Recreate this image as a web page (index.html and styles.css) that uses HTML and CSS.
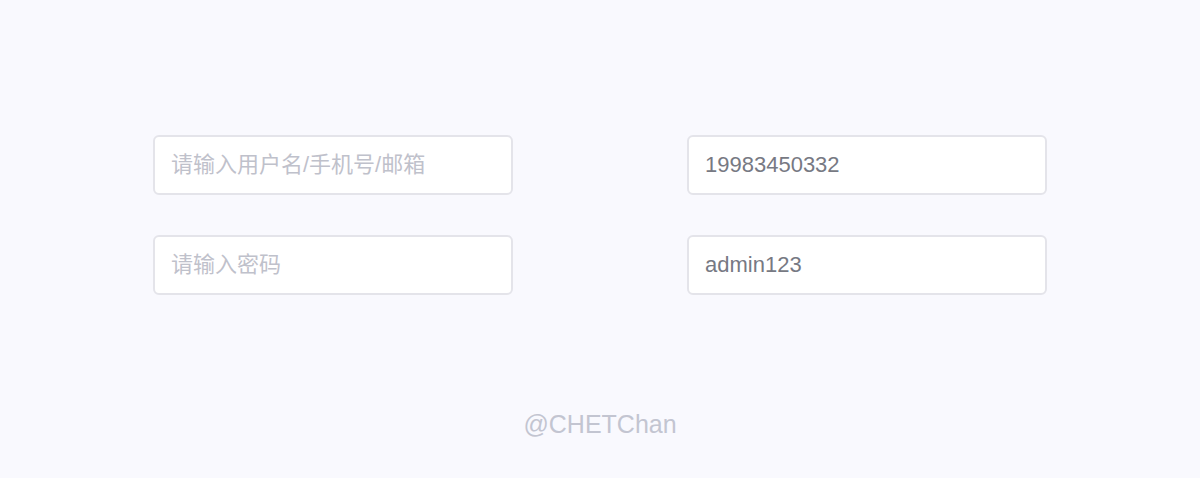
FILE: index.html
```html
<!DOCTYPE html>
<html lang="zh-CN">
<head>
<meta charset="utf-8">
<title>Inputs</title>
<link rel="stylesheet" href="styles.css">
</head>
<body>
<main class="page">
  <div class="grid">
    <input class="field" type="text" placeholder="请输入用户名/手机号/邮箱">
    <input class="field" type="text" value="19983450332">
    <input class="field" type="text" placeholder="请输入密码">
    <input class="field" type="text" value="admin123">
  </div>
  <footer class="credit">@CHETChan</footer>
</main>
</body>
</html>
```
FILE: styles.css
```css
html, body {
  margin: 0;
  padding: 0;
  background: #f9f9fe;
}
.page {
  width: 1200px;
  height: 478px;
  padding-top: 135px;
  box-sizing: border-box;
  font-family: "Liberation Sans", "Noto Sans CJK SC", sans-serif;
}
.grid {
  display: grid;
  grid-template-columns: 360px 360px;
  column-gap: 174px;
  row-gap: 40px;
  justify-content: center;
}
.field {
  width: 360px;
  height: 60px;
  box-sizing: border-box;
  border: 2px solid #e4e4ea;
  border-radius: 6px;
  background: #ffffff;
  padding: 0 0 0 16px;
  margin: 0;
  font-family: "Liberation Sans", "Noto Sans CJK SC", sans-serif;
  font-size: 22px;
  color: #777983;
  outline: none;
}
.field::placeholder {
  color: #bfc1cb;
  opacity: 1;
}
.credit {
  margin-top: 114px;
  text-align: center;
  font-size: 25px;
  line-height: 30px;
  color: #c3c5d1;
}
```
